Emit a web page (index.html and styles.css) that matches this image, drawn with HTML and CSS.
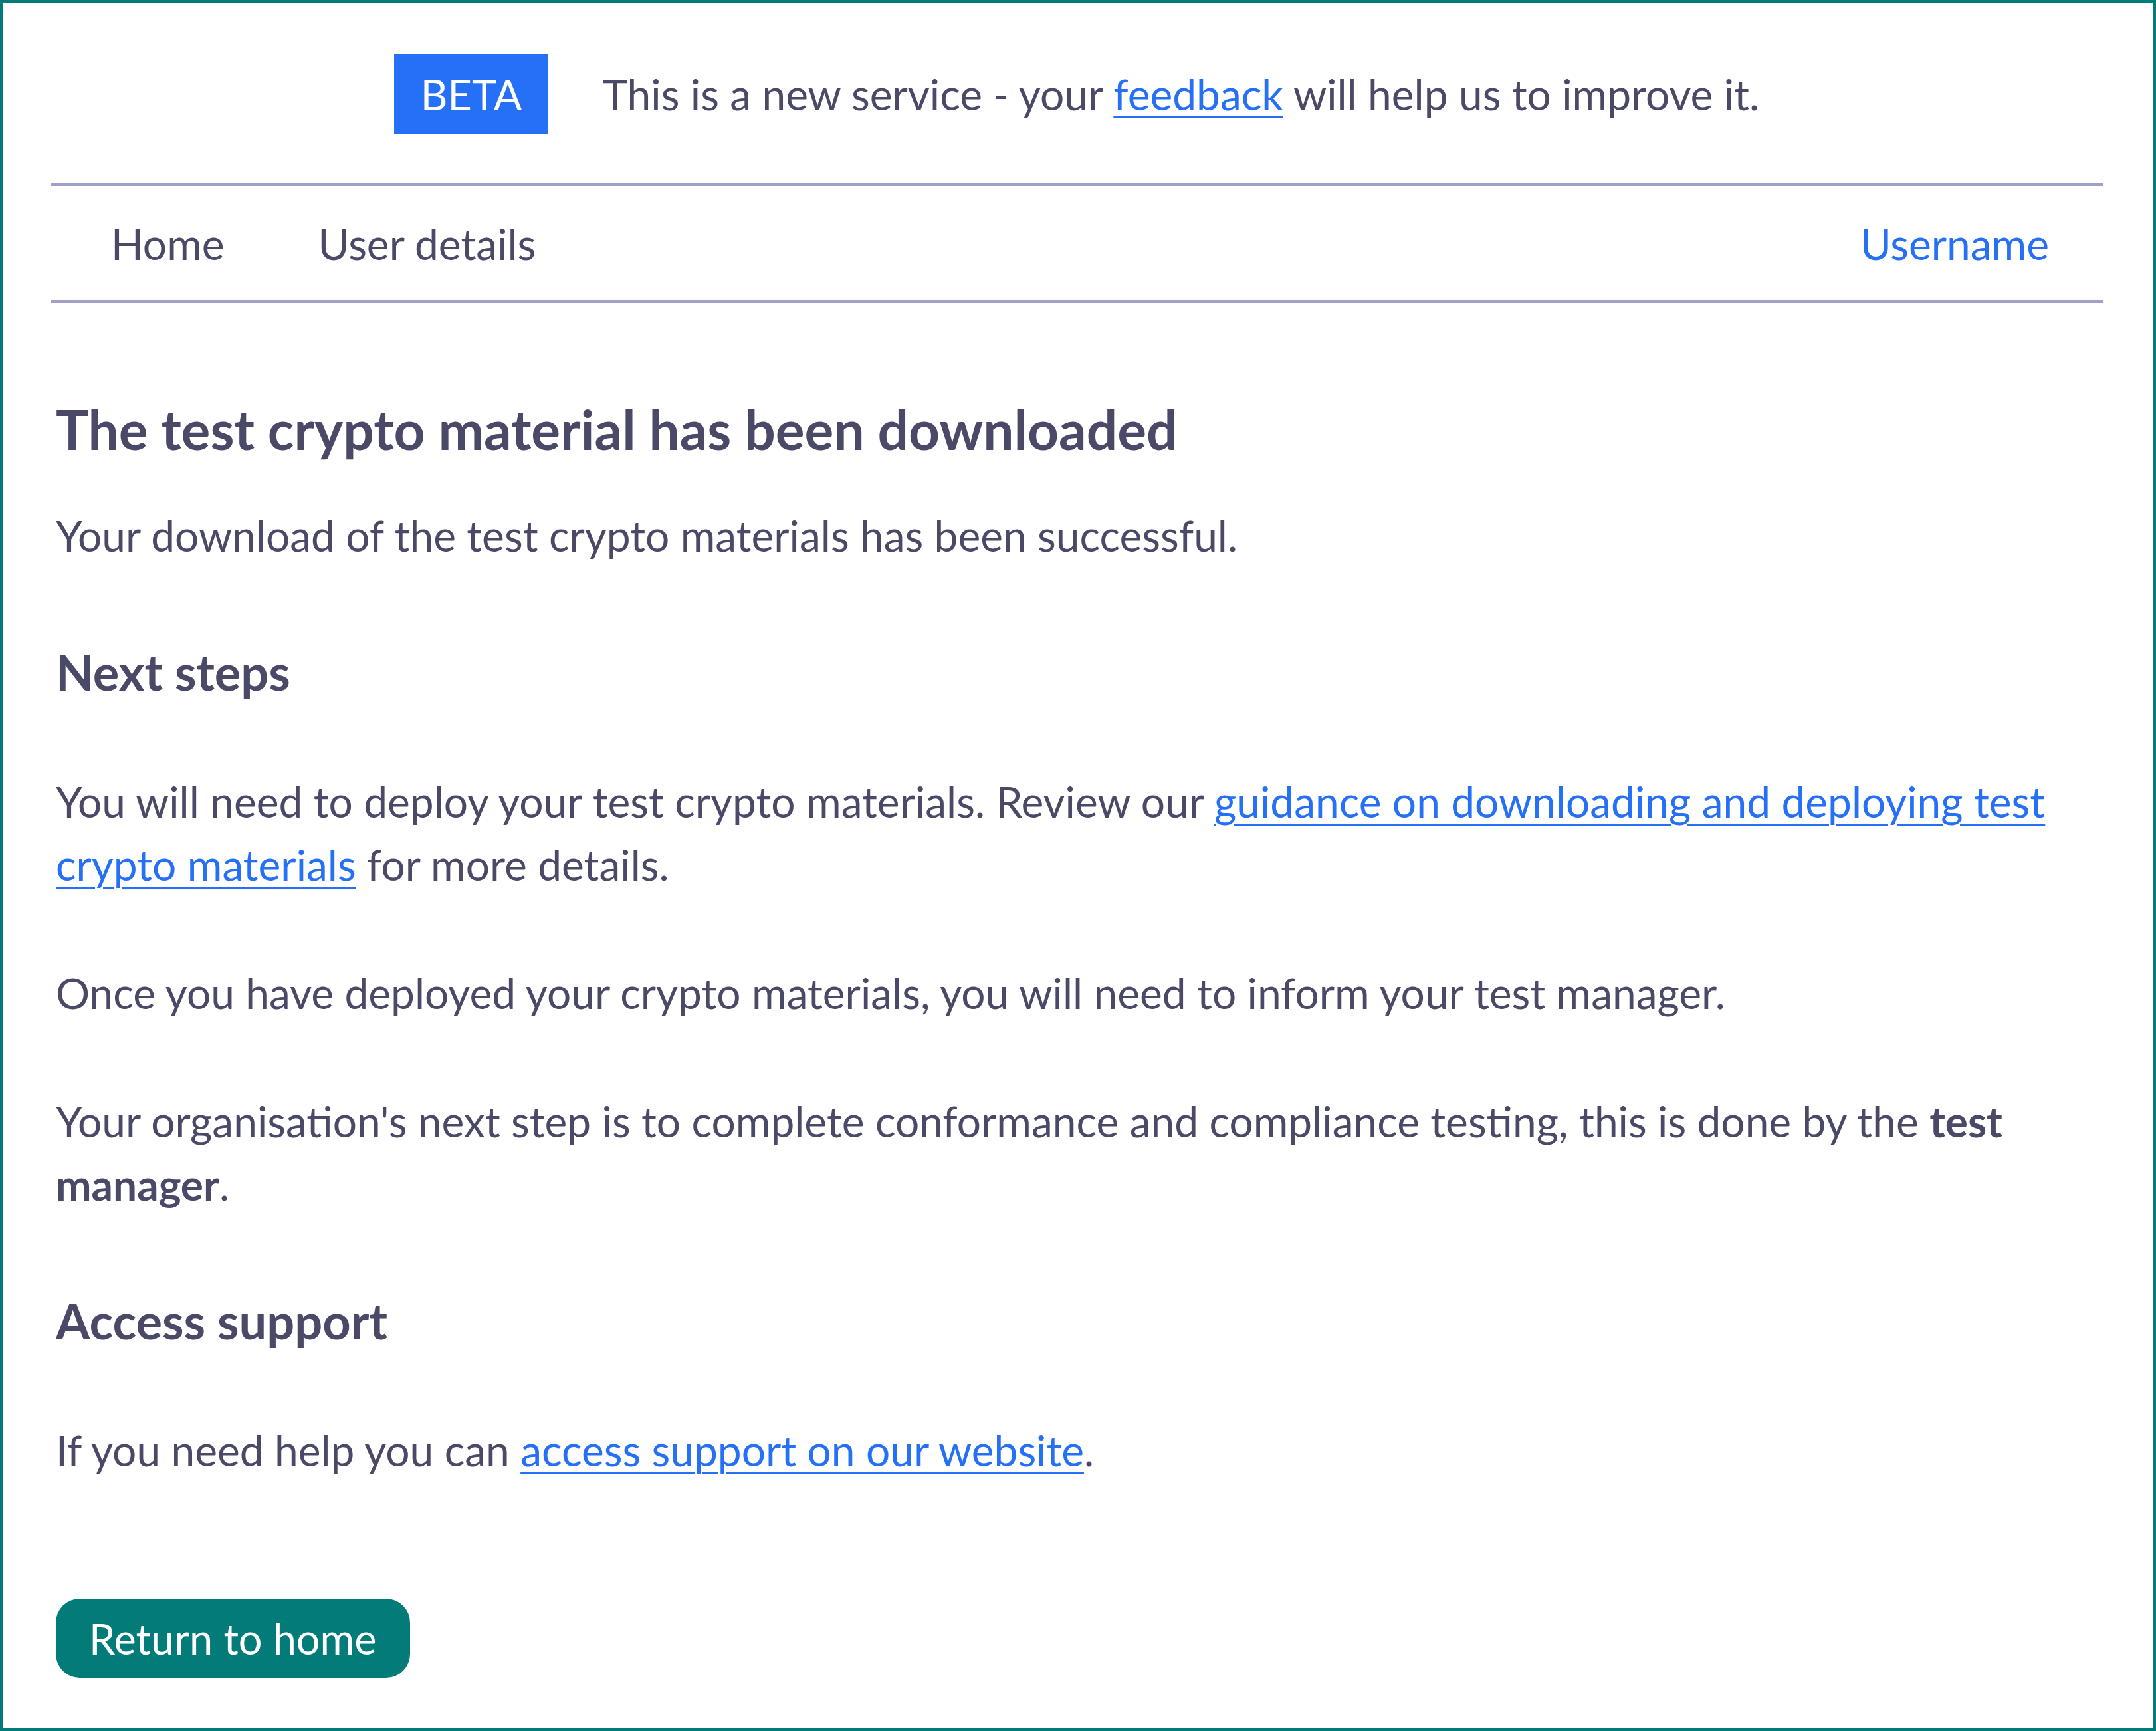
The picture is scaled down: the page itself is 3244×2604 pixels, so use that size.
FILE: index.html
```html
<!DOCTYPE html>
<html lang="en">
<head>
    <meta charset="UTF-8">
    <meta name="viewport" content="width=device-width, initial-scale=1.0">
    <title>Test crypto material downloaded</title>
    <link rel="stylesheet" href="styles.css">
</head>
<body>
    <div class="page">
        <div class="beta-banner">
            <span class="beta-tag">BETA</span>
            <p>This is a new service - your <a href="#">feedback</a> will help us to improve it.</p>
        </div>

        <nav class="nav">
            <div class="nav-links">
                <a href="#">Home</a>
                <a href="#">User details</a>
            </div>
            <a href="#" class="nav-user">Username</a>
        </nav>

        <main class="content">
            <h1>The test crypto material has been downloaded</h1>
            <p class="lead">Your download of the test crypto materials has been successful.</p>

            <h2>Next steps</h2>
            <p>You will need to deploy your test crypto materials. Review our <a href="#">guidance on downloading and deploying test crypto materials</a> for more details.</p>
            <p>Once you have deployed your crypto materials, you will need to inform your test manager.</p>
            <p>Your organisation's next step is to complete conformance and compliance testing, this is done by the <strong>test manager</strong>.</p>

            <h2>Access support</h2>
            <p>If you need help you can <a href="#">access support on our website</a>.</p>

            <a href="#" class="button">Return to home</a>
        </main>
    </div>
</body>
</html>
```

FILE: styles.css
```css
* {
    margin: 0;
    padding: 0;
    box-sizing: border-box;
}

body {
    font-family: 'Lato', 'Noto Sans', sans-serif;
    color: #4a4a68;
    background: white;
}

a {
    color: #2570f7;
    text-decoration: underline;
    text-decoration-thickness: 3px;
    text-underline-offset: 9px;
}

.page {
    min-height: 100vh;
    border: 4px solid #027b79;
    padding: 0 76px 0 72px;
}

.beta-banner {
    display: flex;
    justify-content: center;
    align-items: center;
    gap: 81px;
    padding-top: 77px;
    font-size: 64px;
}

.beta-tag {
    display: flex;
    align-items: center;
    height: 120px;
    padding: 0 40px;
    background: #2570f7;
    color: white;
    font-size: 63px;
}

.nav {
    display: flex;
    justify-content: space-between;
    align-items: center;
    height: 180px;
    margin-top: 75px;
    padding: 0 81px 0 91px;
    border-top: 4px solid #9fa1cb;
    border-bottom: 4px solid #9fa1cb;
    font-size: 64px;
}

.nav a {
    text-decoration: none;
}

.nav-links {
    display: flex;
    gap: 141px;
}

.nav-links a {
    color: #4a4a68;
}

.nav-user {
    color: #2570f7;
}

.content {
    padding: 0 8px;
    font-size: 64px;
    line-height: 95px;
}

.content h1 {
    font-size: 82px;
    line-height: 100px;
    font-weight: 700;
    margin: 139px 0 63px;
}

.content h2 {
    font-size: 74px;
    line-height: 90px;
    font-weight: 700;
    margin: 113px 0 102px;
}

.content p {
    margin-bottom: 98px;
}

.content strong {
    font-weight: 700;
}

.button {
    display: inline-flex;
    align-items: center;
    height: 119px;
    margin-top: 78px;
    padding: 0 50px;
    background: #027b79;
    color: white;
    border-radius: 36px;
    font-size: 63px;
    text-decoration: none;
}
```
